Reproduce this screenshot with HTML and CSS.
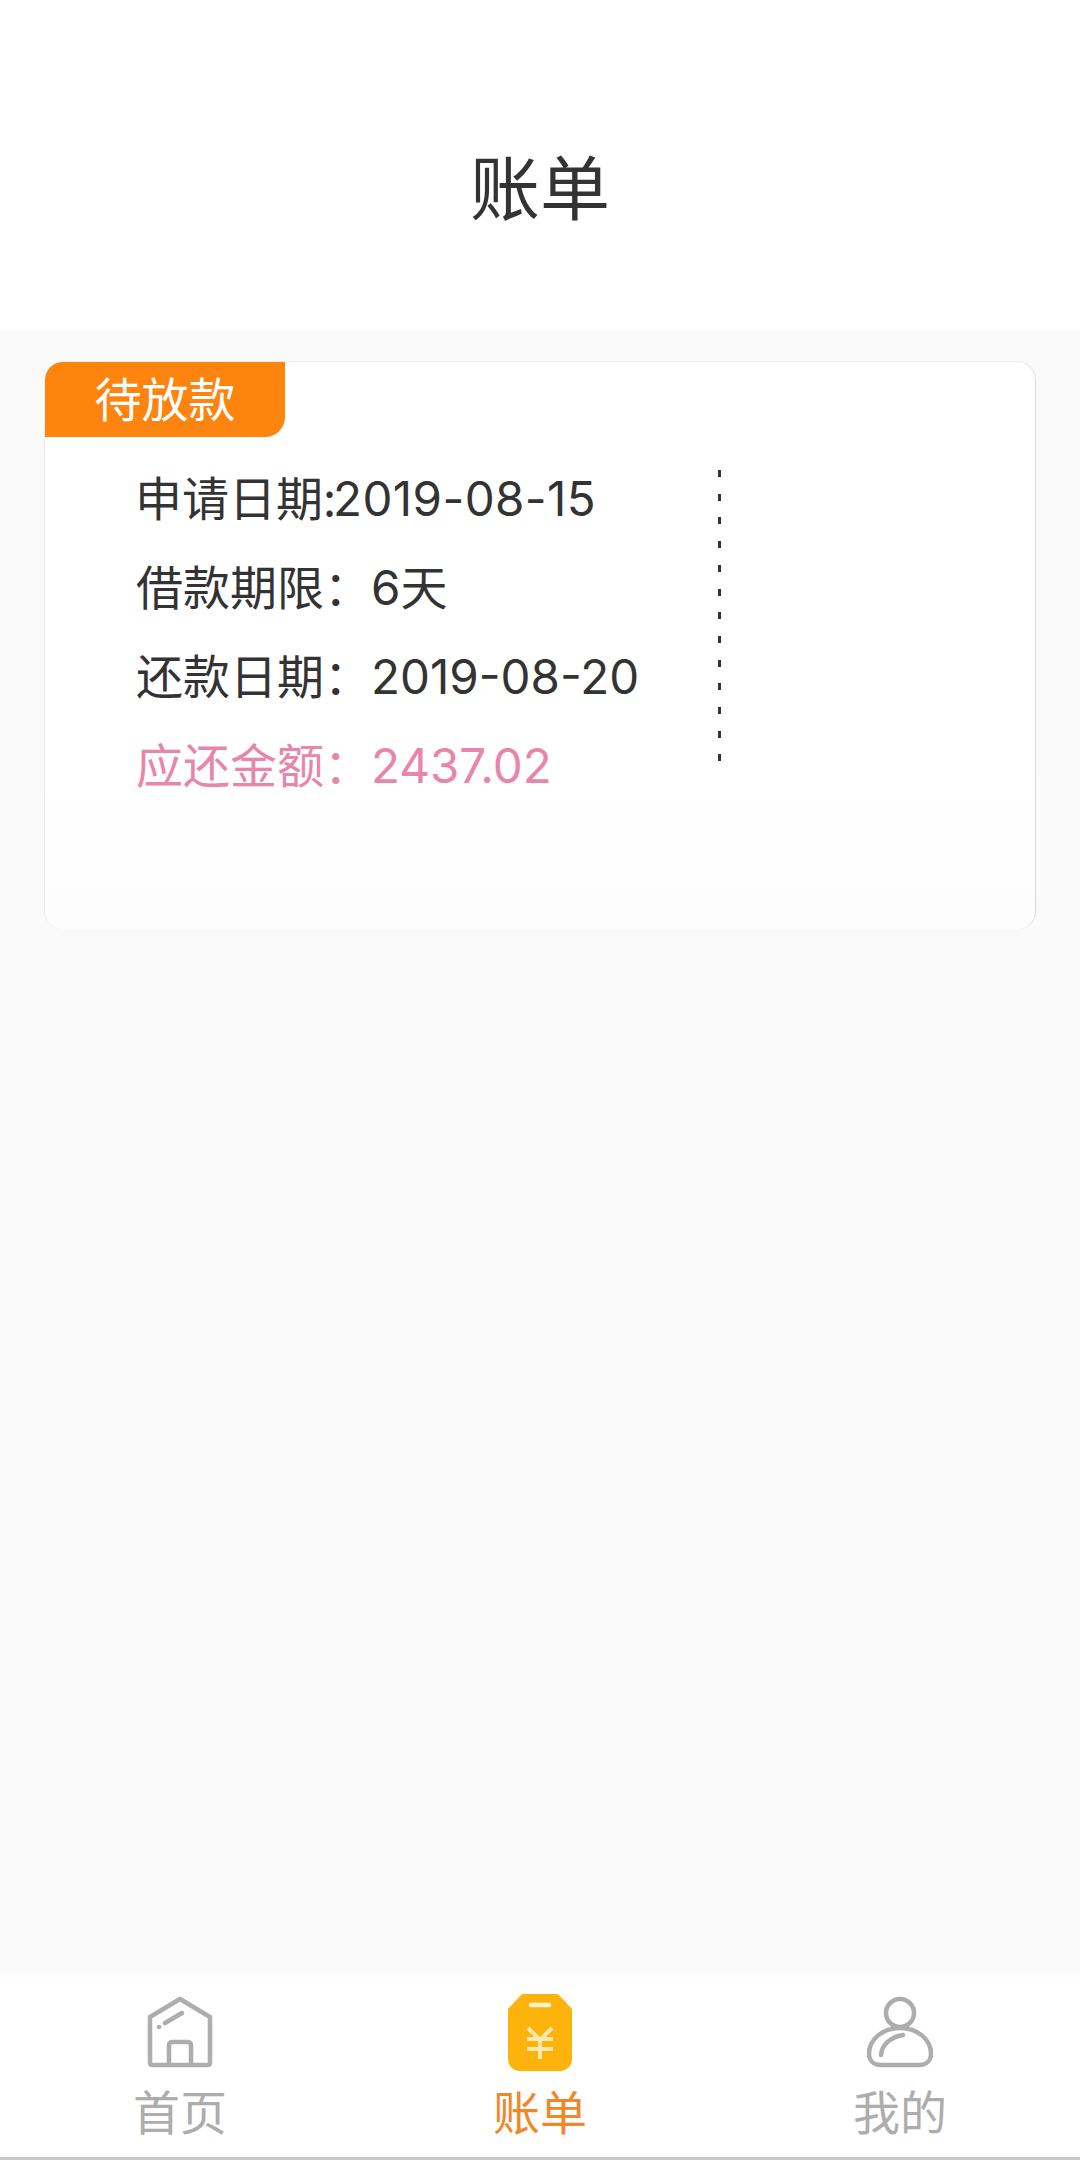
FILE: index.html
```html
<!DOCTYPE html>
<html lang="zh-CN">
<head>
<meta charset="utf-8">
<title>账单</title>
<link rel="stylesheet" href="styles.css">
</head>
<body>
<div class="page">
  <header class="header"><h1 class="title">账单</h1></header>
  <main class="content">
    <section class="card">
      <div class="tag">待放款</div>
      <div class="card-body">
        <div class="rows">
          <p class="row row-first">申请日期:<span class="num num-tight">2019-08-15</span></p>
          <p class="row">借款期限<span class="colon">：</span><span class="num">6</span>天</p>
          <p class="row">还款日期<span class="colon">：</span><span class="num">2019-08-20</span></p>
          <p class="row row-due">应还金额<span class="colon">：</span><span class="num">2437.02</span></p>
        </div>
        <div class="divider"></div>
      </div>
    </section>
  </main>
  <nav class="tabbar">
    <div class="tab">
      <svg class="tab-icon" viewBox="0 0 66 72" fill="none" stroke="#adadad" stroke-width="4.5" stroke-linejoin="round" stroke-linecap="round">
        <path d="M3 21 33 3 63 21V67a2 2 0 0 1-2 2H5a2 2 0 0 1-2-2Z"/>
        <path d="M22 69V49a3 3 0 0 1 3-3H41a3 3 0 0 1 3 3V69"/>
        <path d="M18 27 35 17"/>
        <path d="M12 31h.1"/>
      </svg>
      <span class="tab-label">首页</span>
    </div>
    <div class="tab tab-active">
      <svg class="tab-icon" viewBox="0 0 66 78">
        <path d="M15 0H51L65 15V65a12 12 0 0 1-12 12H13A12 12 0 0 1 1 65V15Z" fill="#fdb30c"/>
        <path d="M24 11H42" stroke="#fff3d0" stroke-width="4.5" stroke-linecap="round" fill="none"/>
        <path d="M21 34 33 46 45 34M20 45H46M20 55H46M33 46V65" stroke="#ffe9b0" stroke-width="4" fill="none"/>
      </svg>
      <span class="tab-label">账单</span>
    </div>
    <div class="tab">
      <svg class="tab-icon" viewBox="0 0 66 72" fill="none" stroke="#adadad" stroke-width="4.5" stroke-linecap="round">
        <circle cx="33" cy="17" r="14"/>
        <path d="M14 69C6 69 2 64 2 58 2 43 16 32 33 32S64 43 64 58C64 64 60 69 52 69Z"/>
        <path d="M14 59C15 48 24 41 36 39"/>
      </svg>
      <span class="tab-label">我的</span>
    </div>
  </nav>
</div>
</body>
</html>
```
FILE: styles.css
```css
* { box-sizing: border-box; }
html, body { margin: 0; padding: 0; }
body {
  width: 1080px;
  height: 2160px;
  overflow: hidden;
  background: #fafafa;
  font-family: "Noto Sans CJK SC", "Inter", sans-serif;
}
.page { display: flex; flex-direction: column; height: 2160px; }
.header {
  height: 330px;
  background: linear-gradient(#fff 99%, #fbfbfb);
  display: flex;
  justify-content: center;
  padding-top: 138px;
}
.title { margin: 0; font-size: 70px; font-weight: 400; line-height: 94px; color: #333; height: 94px; }
.content { flex: 1; padding: 32px 45px 0 45px; }
.card {
  width: 990px;
  height: 567px;
  background: linear-gradient(#fff 70%, #fdfdfd);
  border-radius: 18px;
  box-shadow: 1px 0 0 #dcdcdc, -1px 0 0 #eeeeee, 0 -1px 0 #eeeeee;
  overflow: hidden;
}
.tag {
  width: 240px;
  height: 75px;
  background: #fe8410;
  color: #fff;
  border-radius: 0 0 20px 0;
  font-size: 47px;
  line-height: 70px;
  text-align: center;
}
.card-body { display: flex; padding: 14px 0 0 91px; }
.rows { width: 582px; }
.row { margin: 0; height: 89px; font-size: 47px; line-height: 89px; color: #333; white-space: nowrap; }
.row-first { margin-left: -1px; }
.num { font-family: "Inter", sans-serif; font-weight: 400; font-size: 47.5px; line-height: 1; }
.num-tight { margin-left: -3px; letter-spacing: .4px; }
.colon { font-family: "Noto Sans CJK TC", sans-serif; line-height: 1; }
.row-due { color: #e885ab; }
.divider {
  width: 3px;
  height: 291px;
  margin-top: 19px;
  background: repeating-linear-gradient(#333 0 7px, transparent 7px 23.7px);
}
.tabbar {
  height: 188px;
  background: linear-gradient(#fcfcfc, #fff 8px);
  border-bottom: 3px solid #c8c8c8;
  display: grid;
  grid-template-columns: repeat(3, 360px);
}
.tab { display: flex; flex-direction: column; align-items: center; padding-top: 24px; color: #adadad; }
.tab-icon { width: 66px; height: 72px; display: block; }
.tab-active .tab-icon { height: 78px; margin: -2px 0 -4px; }
.tab-label { font-size: 47px; line-height: 62px; margin-top: 11px; }
.tab-active { color: #f0882a; }
```
